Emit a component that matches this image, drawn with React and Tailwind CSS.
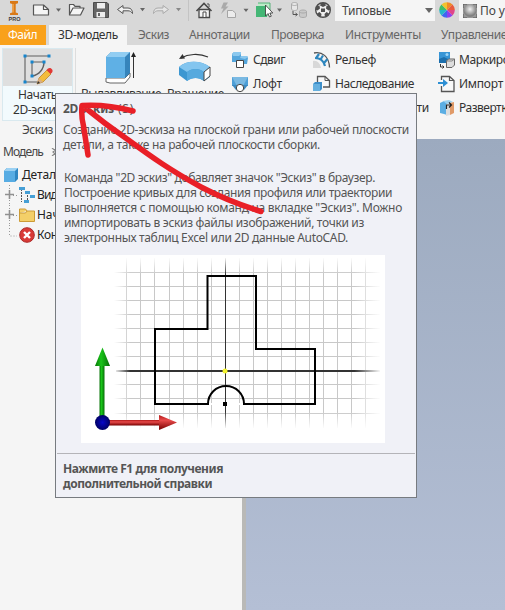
import { useLayoutEffect, useRef, useState } from "react";

// Single line of text, tracked so that it fills exactly `w` pixels.
function Fit({ w, children, className = "" }) {
  const ref = useRef(null);
  const [spacing, setSpacing] = useState(0);
  useLayoutEffect(() => {
    const natural = ref.current.getBoundingClientRect().width;
    setSpacing((w - natural) / children.length);
  }, [w, children]);
  return (
    <span ref={ref} className={`inline-block w-max shrink-0 whitespace-pre ${className}`} style={{ letterSpacing: `${spacing}px` }}>
      {children}
    </span>
  );
}

function QuickIcons() {
  return (
    <svg viewBox="0 0 335 25" className="h-[25px] w-[335px] shrink-0">
      <path d="M10 1h8v2.200l-2.300.8v8.500l2.300.8V15h-8v-1.700l2.300-.8V4L10 3.200z" fill="#d97917" />
      <path d="M12.300 4h1.500v8.500h-1.500z" fill="#f3a64c" />
      <text x="8.500" y="21" fontFamily="Liberation Sans" fontWeight="700" fontSize="5.500" fill="#443c38" textLength="12">PRO</text>
      <g fill="#f5f5f5" stroke="#555" strokeWidth="1.200" strokeLinejoin="round">
        <path d="M33.500 5h10l5 4.500V15h-15z" />
        <path d="M43.500 5v4.500h5" fill="none" />
        <path d="M69.500 14.500V4.500h4l1.500 1.800h5V8h4l-3.500 7h-11zM69.500 14.500L73 8h7" />
      </g>
      <path d="M56 8.500h5l-2.500 3.300z" fill="#666" />
      <path d="M93.500 2.500H107l1.500 1.500v13.500h-15z" fill="#666" stroke="#4c4c4c" />
      <path d="M97 3h8v5.500h-8zM96.500 12h8.500v5.500h-8.500z" fill="#eee" />
      <path d="M98 13h2v3h-2z" fill="#666" />
      <path d="M117.500 9.500l5.500-4v2.500h5c3 0 4.500 2 4.500 5.500-1.500-2-2.500-2.700-4.500-2.700h-5v2.700z" fill="#f1f1f1" stroke="#555" />
      <path d="M140 8h5l-2.500 3.300zM277 8.500h5l-2.500 3.300zM243.500 8.800h5L246 12z" fill="#666" />
      <path d="M168.500 9.500l-5.500-4v2.500h-5c-3 0-4.500 2-4.500 5.500 1.500-2 2.500-2.700 4.500-2.700h5v2.700z" fill="#e5e5e5" stroke="#aaa" />
      <path d="M176 8h5l-2.500 3.300z" fill="#888" />
      <path d="M188.500 0v21" stroke="#c4c4c4" />
      <path d="M199 9.500h10.500v8H199z" fill="#f4f4f4" stroke="#494949" strokeWidth="1.300" />
      <path d="M196.500 11l7.500-7.500 7.500 7.500" fill="none" stroke="#494949" strokeWidth="1.600" />
      <path d="M207 4h2v3M203 17v-5h3v5" fill="#fff" stroke="#494949" />
      <path d="M223.500 2.500h4.500l-2.500 4h3L221 14l2.500-5.500H221z" fill="#aaa" />
      <path d="M227.500 10.500h5l3 2.500v4.500h-8z" fill="#ececec" stroke="#a5a5a5" />
      <path d="M258 3h12v12h-12" fill="#bcebc8" stroke="#3aa864" strokeWidth=".8" />
      <path d="M256 6h11v11h-11z" fill="#44b675" />
      <path d="M265.500 5v11l2.500-2.500 1.500 3.500 1.800-.8-1.500-3.200h3z" fill="#fff" stroke="#333" strokeWidth=".8" />
      <g fill="#e6e6e6" stroke="#aaa">
        <path d="M291.500 4v5c0 2 6 2 6 0V4c0-2-6-2-6 0s6 2 6 0" />
        <path d="M299.500 11.500v4.500c0 2 7 2 7 0v-4.500c0-2-7-2-7 0s7 2 7 0" fill="#c9c9c9" />
      </g>
      <path d="M293 11v3.500h4M295.500 13l2 1.500-2 1.500" fill="none" stroke="#555" />
      <circle cx="323" cy="10" r="7.300" fill="#efefef" stroke="#4a4a4a" strokeWidth="1.400" />
      <path d="M321 3h4l1 2.500-3 1.500-3-1.500zM321 8.500h4v3.500h-4zM316 6l3.500-.5.5 3-2.500 2-2-1zM330 6l-3.500-.5-.5 3 2.500 2 2-1zM317 13.500l2.500-1.500 2 2-.5 3-3-1zM329 13.500l-2.500-1.500-2 2 .5 3 3-1z" fill="#505050" />
    </svg>
  );
}

const wheelSlices = ["#f08a24", "#e95b3c", "#e0468a", "#8b3ff0", "#3f66f0", "#26b7c9", "#3fbd68", "#f2c12e"];

function ColorWheel() {
  return (
    <svg viewBox="-8 -8 16 16" className="size-4 shrink-0">
      {wheelSlices.map((c, i) => (
        <path key={c} d="M0 0L0-7.800A7.800 7.800 0 0 1 5.520-5.520Z" fill={c} transform={`rotate(${i * 45})`} />
      ))}
    </svg>
  );
}

function QuickAccess() {
  return (
    <div className="flex h-[25px] items-start bg-[#d8d8d8]">
      <QuickIcons />
      <div className="flex h-[21px] w-[100px] shrink-0 items-center justify-between bg-[#f5f5f5] pr-0.5 pl-[7px]">
        <Fit w={49}>Типовые</Fit>
        <svg viewBox="0 0 8 5" className="h-[5px] w-2"><path d="M0 0h8L4 5z" fill="#666" /></svg>
      </div>
      <div className="flex h-5 w-6 shrink-0 items-center justify-center"><ColorWheel /></div>
      <div className="flex h-[21px] flex-1 items-center gap-[3px] overflow-hidden bg-[#f5f5f5] pl-1">
        <svg viewBox="0 0 14 14" className="size-3.5 shrink-0">
          <defs><radialGradient id="ball" cy=".4"><stop offset="0" stopColor="#f2f2f2" /><stop offset="1" stopColor="#818181" /></radialGradient></defs>
          <path d="M0 0h14v14H0z" fill="#999" />
          <circle cx="7" cy="6.500" r="6.500" fill="url(#ball)" />
          <path d="M0 4V0h4M10 0h4v4M0 10v4h4M14 10v4h-4" fill="none" stroke="#555" />
        </svg>
        <Fit w={58}>По умолч.</Fit>
      </div>
    </div>
  );
}

function Tabs() {
  return (
    <div className="flex h-5 items-center bg-[#d8d8d8] text-[#666]">
      <div className="flex h-full w-[46px] shrink-0 items-center bg-[#f9a11b] pl-2 text-white"><Fit w={29}>Файл</Fit></div>
      <div className="ml-[3px] flex h-full w-[78px] shrink-0 items-center bg-[#f5f5f5] pl-[9px] text-[#333]"><Fit w={60}>3D-модель</Fit></div>
      <Fit w={31} className="ml-[11px]">Эскиз</Fit>
      <Fit w={61} className="ml-5">Аннотации</Fit>
      <Fit w={53} className="ml-[21px]">Проверка</Fit>
      <Fit w={76} className="ml-[21px]">Инструменты</Fit>
      <Fit w={66} className="ml-5">Управление</Fit>
    </div>
  );
}

const Icon = ({ children }) => <svg viewBox="0 0 18 18" className="size-[18px] shrink-0">{children}</svg>;

const icons = {
  sweep: (
    <Icon>
      <path d="M1 3l2-2h7v4h6l1 2-1 6H7L5 11H1z" fill="#55a6dc" />
      <path d="M1 3l2-2h7v2l-2 2H2zM10 5h6l1 1-3 2-5-1z" fill="#8bc8ee" />
      <path d="M5.500 9.500h7v7h-7z" fill="#fff" stroke="#444" />
    </Icon>
  ),
  loft: (
    <Icon>
      <path d="M1 2h16v9H1z" fill="#4d9fd7" />
      <path d="M1 2h16l-5 9H6z" fill="#7ab9e2" />
      <path d="M1 10h16l-4 5H5z" fill="#3d8ac0" />
      <circle cx="9" cy="13" r="3.700" fill="#fff" stroke="#444" />
    </Icon>
  ),
  emboss: (
    <Icon>
      <path d="M1 2C9 .5 16 5 16.500 16.500" fill="none" stroke="#555" strokeWidth="1.300" />
      <path d="M0 10c4-1 7 2 8 7H0z" fill="#d8d8d8" />
      <path d="M2 7c6 0 9 4 10 8M3.500 6.500L6 3M7.500 8.500L10 4.500M11 12l3.500-4" fill="none" stroke="#2e86bd" strokeWidth="2.200" />
    </Icon>
  ),
  derive: (
    <Icon>
      <path d="M4.500 8V1.500H12l4.500 4v6.500H10" fill="#f8f8f8" stroke="#555" strokeWidth="1.300" />
      <path d="M12 1.500v4h4.500" fill="none" stroke="#555" />
      <path d="M0 9l2-2h7v7l-2 2H0z" fill="#3d8fca" />
      <path d="M0 9h7v7H0z" fill="#66b0df" />
    </Icon>
  ),
  decal: (
    <Icon>
      <path d="M1 1h11v11H1z" fill="#3795d6" />
      <path d="M1 8l5-2 6 3v3H1z" fill="#1b6eac" />
      <circle cx="9" cy="3.500" r="1.500" fill="#9bd4f6" />
      <path d="M2.500 13v3H6M4.500 14.500L6 16l-1.500 1.500" fill="none" stroke="#333" />
      <path d="M8.500 10l2-2h6v6l-2.500 2.500H8.500z" fill="#ddd" stroke="#666" />
      <path d="M8.500 10H14l2.500-2" fill="none" stroke="#888" />
    </Icon>
  ),
  importFile: (
    <Icon>
      <path d="M3.500 5V1.500h8l4.500 4v11H3.500V11" fill="#f8f8f8" stroke="#555" strokeWidth="1.300" />
      <path d="M11.500 1.500v4H16" fill="none" stroke="#555" strokeWidth="1.200" />
      <path d="M0 7h5V4l5 4-5 4V9H0z" fill="#2d8fd3" />
    </Icon>
  ),
  unwrap: (
    <Icon>
      <path d="M2 4l4-2 3 2v12l-3-1-4-1z" fill="#5baee3" />
      <path d="M5 2l6-1 4 2-6 2z" fill="#99cfee" />
      <path d="M8 5l4 1v10l-4 1z" fill="#ddd" />
      <path d="M12 4l4-1v11l-4 2z" fill="#e09a68" />
      <path d="M8.500 10V6H13M11 3.500L13.500 6 11 8.500" fill="none" stroke="#222" strokeWidth="1.200" />
    </Icon>
  ),
};

const Command = ({ icon, label, w, gap = "gap-1" }) => (
  <div className={`flex h-6 items-center ${gap}`}>
    {icons[icon] ?? <span className="w-[18px] shrink-0" />}
    <Fit w={w}>{label}</Fit>
  </div>
);

function Ribbon() {
  return (
    <div className="flex h-[94px] shrink-0 overflow-hidden bg-[#f5f5f5]">
      <div className="mr-0.5 ml-0.5 flex w-[71px] shrink-0 flex-col pt-[3px]">
        <div className="flex h-[73px] flex-col border border-[#d9e9ef] bg-[#f2fafd]">
          <div className="flex h-[37px] shrink-0 justify-center bg-[#dfdfdf]">
            <svg viewBox="0 0 34 34" className="mt-1 h-[34px] w-[34px]">
              <path d="M4 3v26M4 3h24M4 29h12M11 23V9h12" fill="none" stroke="#606060" strokeWidth="1.100" />
              <path d="M23 9c0 7-5 13-12 14" fill="none" stroke="#606060" strokeWidth="1.400" />
              <path d="M2.500 1.500h3v3h-3zM26.500 1.500h3v3h-3zM2.500 27.500h3v3h-3zM9.500 7.500h3v3h-3zM21.500 7.500h3v3h-3zM9.500 21.500h3v3h-3z" fill="#1685cd" />
              <path d="M18 25l8-8 4 4-8 8-6 2z" fill="#f3bd3d" stroke="#b67c20" strokeWidth=".7" />
              <path d="M18 25l4 4-6 2z" fill="#d7ad85" />
              <path d="M16 31l1-3 2 2z" fill="#333" />
              <path d="M25.500 17l1.500-1.500c2.500-2 6 1.500 4 4L29.500 21z" fill="#e13834" />
            </svg>
          </div>
          <div className="flex flex-col items-start pt-px pl-[10px] leading-[15px] text-[#333]">
            <Fit w={39} className="ml-[5px]">Начать</Fit>
            <Fit w={48}>2D-эскиз</Fit>
          </div>
        </div>
        <Fit w={31} className="mt-[1px] ml-5 text-[#444]">Эскиз</Fit>
      </div>
      <div className="mt-[3px] h-[88px] w-px shrink-0 bg-[#ddd]" />
      <div className="flex w-[86px] shrink-0 flex-col items-start pl-[5px]">
        <svg viewBox="0 0 34 36" className="mt-[5px] ml-[23px] h-9 w-[34px]">
          <path d="M2 28v4l4 1h15l5-6v-4l-5 5H6z" fill="#fff" stroke="#666" />
          <path d="M2 7l5-5h19v21l-5 5H2z" fill="#3684bb" />
          <path d="M2 7h19v21H2z" fill="#5fb0e5" />
          <path d="M2 7l5-5h19l-5 5z" fill="#91cdf2" />
          <path d="M29.500 28V4" stroke="#333" />
          <path d="M27 7l2.500-5L32 7z" fill="#222" />
        </svg>
        <Fit w={80} className="text-[#333]">Выдавливание</Fit>
      </div>
      <div className="flex w-[69px] shrink-0 flex-col items-start pl-[5px]">
        <svg viewBox="0 0 36 36" className="mt-[5px] ml-[9px] size-9">
          <path d="M5 8c7-4 18-5 27-1" fill="none" stroke="#333" strokeWidth="1.200" />
          <path d="M3 9l3.500-5L9 8.500z" fill="#333" />
          <path d="M3 17C10 10 25 10 34 17v10l-6 4c-5-4-12-4-17 0l-8-6z" fill="#3d97d1" />
          <path d="M3 17C10 10 25 10 34 17l-6 5c-5-4-12-4-17 0z" fill="#83c5ef" />
          <path d="M11 22c5-4 12-4 17 0v9c-5-4-12-4-17 0z" fill="#56a9de" />
          <path d="M28 22l6-5v9l-6 5z" fill="#fff" stroke="#444" />
        </svg>
        <Fit w={57} className="text-[#333]">Вращение</Fit>
      </div>
      <div className="flex w-[82px] shrink-0 flex-col pt-[3px] text-[#333]">
        <Command icon="sweep" label="Сдвиг" w={32} />
        <Command icon="loft" label="Лофт" w={29} />
      </div>
      <div className="flex w-[125px] shrink-0 flex-col pt-[3px] text-[#333]">
        <Command icon="emboss" label="Рельеф" w={41} />
        <Command icon="derive" label="Наследование" w={79} />
        <Command label="Ребро жесткости" w={94} />
      </div>
      <div className="flex w-[68px] shrink-0 flex-col pt-[3px] text-[#333]">
        <Command icon="decal" label="Маркировка" w={69} gap="gap-[3px]" />
        <Command icon="importFile" label="Импорт" w={44} gap="gap-[3px]" />
        <Command icon="unwrap" label="Развертка" w={54} gap="gap-[3px]" />
      </div>
    </div>
  );
}

const Plus = () => (
  <svg viewBox="0 0 15 20" className="h-5 w-[15px] shrink-0">
    <path d="M7.500 0v20M11 10.500h4" stroke="#999" strokeDasharray="1 2" />
    <path d="M3 9.500h9M7.500 5v9" stroke="#909090" strokeWidth="1.600" />
  </svg>
);

function Browser() {
  return (
    <div className="w-[242px] shrink-0 bg-[#f5f5f5] text-[#222]">
      <div className="flex h-[26px] items-center pl-[3px] text-[#444]">
        <Fit w={40}>Модель</Fit>
        <svg viewBox="0 0 8 8" className="ml-2 size-2"><path d="M1 0l5 4-5 4M6 0L2 4l4 4" fill="none" stroke="#888" strokeWidth="1.200" /></svg>
      </div>
      <div className="flex h-5 items-center gap-1 pl-1">
        <svg viewBox="0 0 14 14" className="size-3.5">
          <path d="M0 3l3-3h11v11l-3 3H0z" fill="#2f86c2" />
          <path d="M0 3h11v11H0z" fill="#57ace3" /><path d="M0 3l3-3h11l-3 3z" fill="#9bd1f3" />
        </svg>
        <Fit w={47}>Деталь1</Fit>
      </div>
      <div className="flex h-5 items-center gap-0.5 pl-0.5">
        <Plus />
        <svg viewBox="0 0 16 16" className="size-4">
          <path d="M2.500 2v13M8.500 5v9" stroke="#555" strokeDasharray="2 1" />
          <path d="M0 0h6v3H0zM6 4h5v3H6zM11 8h5v3h-5zM5 13h5v3H5z" fill="#469fd5" />
        </svg>
        <Fit w={28}>Виды</Fit>
      </div>
      <div className="flex h-5 items-center gap-0.5 pl-0.5">
        <Plus />
        <svg viewBox="0 0 16 14" className="h-3.5 w-4"><path d="M.5 13.500V1h6l1.500 2h7.500v10.500zM.5 5h6L8 3" fill="#f4cf68" stroke="#cc9b36" /></svg>
        <Fit w={43}>Начало</Fit>
      </div>
      <div className="flex h-5 items-center gap-0.5 pl-0.5">
        <svg viewBox="0 0 15 20" className="h-5 w-[15px] shrink-0"><path d="M7.500 0v11H15" fill="none" stroke="#999" strokeDasharray="1 2" /></svg>
        <svg viewBox="0 0 16 16" className="size-4">
          <circle cx="8" cy="8" r="7.300" fill="#d83a36" stroke="#ad2a2a" />
          <path d="M5 5l6 6M11 5l-6 6" stroke="#fff" strokeWidth="2.400" />
        </svg>
        <Fit w={97}>Конец элементов</Fit>
      </div>
    </div>
  );
}

const gridX = [126.5, 140.5, 154.5, 169.5, 183.5, 197.5, 211.5, 239.5, 253.5, 267.5, 281.5, 295.5, 309.5, 323.5, 337.5, 351.5, 365.5];
const gridY = [272.5, 286.5, 300.5, 314.5, 328.5, 342.5, 356.5, 384.5, 398.5, 413.5];

function SketchDiagram() {
  return (
    <svg viewBox="81 255 304 188" className="mt-[10px] ml-[25px] h-[188px] w-[304px] shrink-0 bg-white">
      <defs>
        <linearGradient id="fadeX"><stop offset="0" stopColor="#fff" /><stop offset=".06" stopColor="#fff" stopOpacity="0" /><stop offset=".9" stopColor="#fff" stopOpacity="0" /><stop offset="1" stopColor="#fff" /></linearGradient>
        <linearGradient id="fadeY" x2="0" y2="1"><stop offset="0" stopColor="#fff" /><stop offset=".1" stopColor="#fff" stopOpacity="0" /><stop offset=".9" stopColor="#fff" stopOpacity="0" /><stop offset="1" stopColor="#fff" /></linearGradient>
        <linearGradient id="green"><stop offset="0" stopColor="#067506" /><stop offset=".4" stopColor="#19c519" /><stop offset="1" stopColor="#076d07" /></linearGradient>
        <linearGradient id="red" x2="0" y2="1"><stop offset="0" stopColor="#b01818" /><stop offset=".35" stopColor="#e84a4a" /><stop offset="1" stopColor="#760000" /></linearGradient>
        <radialGradient id="blue"><stop offset="0" stopColor="#0808c8" /><stop offset="1" stopColor="#000064" /></radialGradient>
      </defs>
      <g stroke="#c8c8c8">
        {gridX.map((x) => <path key={x} d={`M${x} 258V428`} />)}
        {gridY.map((y) => <path key={y} d={`M114 ${y}H380`} />)}
      </g>
      <path d="M225.500 258V428" stroke="#333" />
      <path d="M116 371H380" stroke="#333" strokeWidth="2" />
      <path d="M114 257h267v172H114z" fill="url(#fadeX)" />
      <path d="M114 257h267v172H114z" fill="url(#fadeY)" />
      <path d="M208 404H155V329h52.500V276H256v73h59v55h-71c0-10-8-18-18-18s-18 8-18 18z" fill="none" stroke="#000" strokeWidth="2" />
      <path d="M209 404h34" stroke="#fff" strokeWidth="2.200" />
      <path d="M225.500 399v13" stroke="#333" />
      <path d="M223 402h4v4h-4z" />
      <circle cx="225" cy="371" r="2.500" fill="#f5f530" />
      <path d="M99.500 365h5v53h-5z" fill="url(#green)" />
      <path d="M102.500 347.500L110 366H95z" fill="url(#green)" />
      <path d="M108 420h52v5.500h-52z" fill="url(#red)" />
      <path d="M159 415l18 7.500-18 7.500z" fill="url(#red)" />
      <circle cx="102.500" cy="422.500" r="7.500" fill="url(#blue)" />
    </svg>
  );
}

const summary = [
  ["Создание 2D-эскиза на плоской грани или рабочей плоскости", 346],
  ["детали, а также на рабочей плоскости сборки.", 257],
];
const details = [
  ['Команда "2D эскиз" добавляет значок "Эскиз" в браузер.', 311],
  ["Построение кривых для создания профиля или траектории", 328],
  ['выполняется с помощью команд на вкладке "Эскиз". Можно', 338],
  ["импортировать в эскиз файлы изображений, точки из", 300],
  ["электронных таблиц Excel или 2D данные AutoCAD.", 284],
];

function Tooltip() {
  return (
    <div className="absolute top-[93px] left-[55px] flex h-[405px] w-[362px] flex-col border border-[#777b80] bg-[#f0f1f7] text-[#555] leading-[15px]">
      <div className="flex pt-[7px] pl-[7px]">
        <Fit w={51} className="font-bold">2D эскиз</Fit>
        <Fit w={16} className="ml-1">(S)</Fit>
      </div>
      <div className="mt-[6px] flex flex-col items-start pl-[7px]">
        {summary.map(([t, w]) => <Fit key={t} w={w}>{t}</Fit>)}
      </div>
      <div className="mt-[18px] flex flex-col items-start pl-2">
        {details.map(([t, w]) => <Fit key={t} w={w}>{t}</Fit>)}
      </div>
      <SketchDiagram />
      <div className="mx-px mt-[10px] h-px shrink-0 bg-[#b4b4b8]" />
      <div className="flex flex-col items-start pt-[7px] pl-[7px] font-bold">
        <Fit w={160}>Нажмите F1 для получения</Fit>
        <Fit w={149}>дополнительной справки</Fit>
      </div>
    </div>
  );
}

export default function App() {
  return (
    <div className="relative flex h-[610px] w-[505px] flex-col overflow-hidden bg-[#f5f5f5] font-['Noto_Sans',sans-serif] text-[12px] leading-[16px] text-[#444]">
      <QuickAccess />
      <Tabs />
      <Ribbon />
      <div className="flex flex-1">
        <Browser />
        <div className="w-1 shrink-0 bg-[#b9b9b7]" />
        <div className="flex-1 bg-linear-to-b from-[#9caabf] to-[#b4bfd5]" />
      </div>
      <Tooltip />
      <svg viewBox="0 0 505 610" className="pointer-events-none absolute inset-0 h-[610px] w-[505px]">
        <path d="M261 211.500C240 205 222 198 201 187C170 170 153 158 127 139Q105 124 83 106M133 111Q106 104 82 105.500Q81 116 83.500 126L88 155" fill="none" stroke="#e91f27" strokeWidth="5.500" strokeLinecap="round" strokeLinejoin="round" />
      </svg>
    </div>
  );
}
